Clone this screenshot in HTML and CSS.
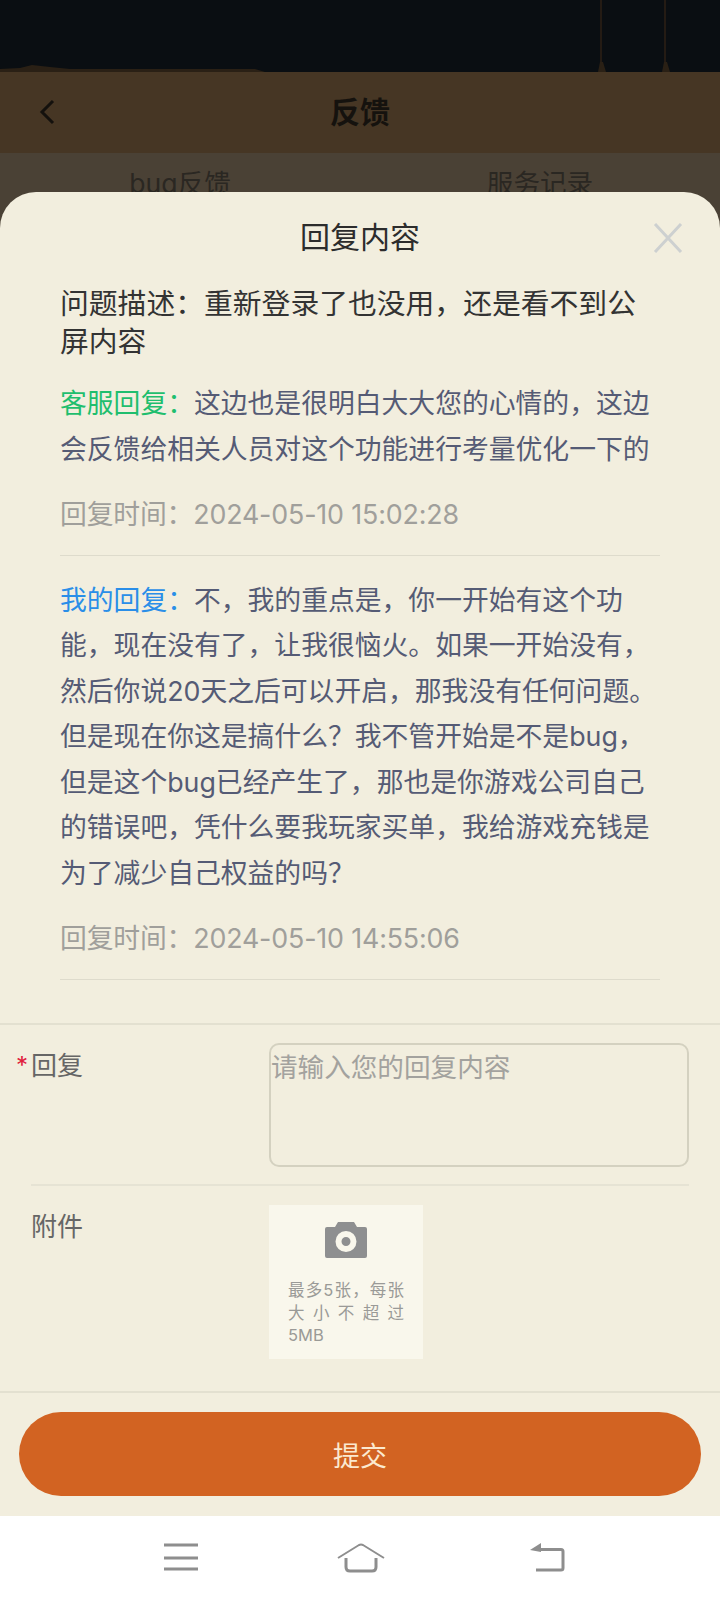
FILE: index.html

```html
<!DOCTYPE html>
<html lang="zh-CN">
<head>
    <meta charset="UTF-8">
    <meta name="viewport" content="width=device-width, initial-scale=1.0">
    <title>回复内容</title>
    <link rel="stylesheet" href="styles.css">
</head>
<body>
    <div class="screen">
        <div class="top-art">
            <svg width="720" height="72" viewBox="0 0 720 72">
                <path d="M0 72 V69 L20 68 L32 65 L50 67 L70 69 L255 69 L265 72 Z" fill="#2a2015"/>
                <path d="M601 0 V62 M665 0 V62" stroke="#241b14" stroke-width="2"/>
                <path d="M598 72 L600 62 H603 L606 72 Z M662 72 L664 62 H667 L670 72 Z" fill="#2a2015"/>
            </svg>
        </div>
        <header class="topbar">
            <svg class="back" width="18" height="26" viewBox="0 0 18 26">
                <path d="M15 2 L4 13 L15 24" fill="none" stroke="#14110d" stroke-width="3"/>
            </svg>
            <h1>反馈</h1>
        </header>
        <nav class="tabs">
            <span>bug反馈</span>
            <span>服务记录</span>
        </nav>

        <section class="sheet">
            <div class="sheet-title">
                回复内容
                <svg class="close" width="30" height="30" viewBox="0 0 30 30">
                    <path d="M2 1 L28 29 M28 1 L2 29" stroke="#cdd0d0" stroke-width="3"/>
                </svg>
            </div>

            <div class="thread">
                <p class="desc">问题描述&#xFF1A;重新登录了也没用&#xFF0C;还是看不到公屏内容</p>

                <div class="reply">
                    <p><span class="kefu">客服回复&#xFF1A;</span>这边也是很明白大大您的心情的&#xFF0C;这边会反馈给相关人员对这个功能进行考量优化一下的</p>
                    <p class="time">回复时间&#xFF1A;2024-05-10 15:02:28</p>
                </div>
                <div class="reply">
                    <p><span class="mine">我的回复&#xFF1A;</span>不&#xFF0C;我的重点是&#xFF0C;你一开始有这个功能&#xFF0C;现在没有了&#xFF0C;让我很恼火。如果一开始没有&#xFF0C;然后你说20天之后可以开启&#xFF0C;那我没有任何问题。但是现在你这是搞什么&#xFF1F;我不管开始是不是bug&#xFF0C;但是这个bug已经产生了&#xFF0C;那也是你游戏公司自己的错误吧&#xFF0C;凭什么要我玩家买单&#xFF0C;我给游戏充钱是为了减少自己权益的吗&#xFF1F;</p>
                    <p class="time">回复时间&#xFF1A;2024-05-10 14:55:06</p>
                </div>
            </div>

            <div class="form">
                <div class="row row-text">
                    <label class="required">回复</label>
                    <div class="input">请输入您的回复内容</div>
                </div>
                <div class="row row-file">
                    <label>附件</label>
                    <div class="upload">
                        <svg class="camera" width="42" height="36" viewBox="0 0 42 36">
                            <path fill-rule="evenodd" fill="#8e8f90" d="M13 0 H29 L32 5 H40 Q42 5 42 7 V34 Q42 36 40 36 H2 Q0 36 0 34 V7 Q0 5 2 5 H10 Z M21 9 A10.500 10.500 0 1 0 21 30 A10.500 10.500 0 1 0 21 9 Z M21 15 A4.500 4.500 0 1 1 21 24 A4.500 4.500 0 1 1 21 15 Z"/>
                        </svg>
                        <p>最多5张&#xFF0C;每张大小不超过5MB</p>
                    </div>
                </div>
            </div>

            <div class="actions">
                <button type="button" class="submit-btn">提交</button>
            </div>
        </section>

        <footer class="navbar">
            <svg width="34" height="28" viewBox="0 0 34 28">
                <path d="M0 2 H34 M0 15 H34 M0 26 H34" stroke="#8e8e8e" stroke-width="3"/>
            </svg>
            <svg class="nav-home" width="48" height="32" viewBox="0 0 48 32">
                <path d="M1 15 L22 2 Q24 1 26 2 L47 15" fill="none" stroke="#8e8e8e" stroke-width="2"/>
                <path d="M9 15 V24 Q9 28 13 28 H35 Q39 28 39 24 V15" fill="none" stroke="#8e8e8e" stroke-width="3"/>
            </svg>
            <svg width="36" height="30" viewBox="0 0 36 30">
                <path d="M0 7 L11 0 V9 Z" fill="#8e8e8e"/>
                <path d="M8 6.500 H31 Q33 6.500 33 8.500 V25 Q33 27 31 27 H6" fill="none" stroke="#8e8e8e" stroke-width="3"/>
            </svg>
        </footer>
    </div>
</body>
</html>
```

FILE: styles.css

```css
* { box-sizing: border-box; }
body { margin: 0; font-family: Inter, "Noto Sans CJK SC", sans-serif; }
p { margin: 0; }
.screen { width: 720px; height: 1600px; display: flex; flex-direction: column; background: #4a4135; overflow: hidden; }

.top-art { height: 72px; background: #0a0e12; }
.top-art svg { display: block; }
.topbar { height: 81px; padding-bottom: 5px; background: #463624; display: flex; align-items: center; justify-content: center; position: relative; }
.topbar h1 { margin: 0; font-size: 30px; font-weight: 700; color: #15120e; }
.back { position: absolute; left: 38px; top: 27px; }
.tabs { height: 39px; overflow: hidden; display: flex; padding-top: 11px; color: #2a2722; font-size: 26.600px; line-height: 38px; }
.tabs span { width: 360px; text-align: center; }

.sheet { height: 1324px; background: #f2eede; border-radius: 36px 36px 0 0; display: flex; flex-direction: column; }
.sheet-title { height: 91px; line-height: 91px; margin-bottom: 2px; text-align: center; font-size: 30px; color: #2c2c2c; position: relative; }
.close { position: absolute; right: 37px; top: 31px; }

.thread { padding: 0 60px; height: 738px; }
.desc { font-size: 28.800px; line-height: 38px; color: #333; margin-bottom: 20px; }
.reply { font-size: 26.800px; line-height: 45.500px; color: #555b75; border-bottom: 1px solid #dedbcc; padding-bottom: 17px; margin-bottom: 22px; }
.kefu { color: #1fbe6e; }
.mine { color: #2a8ee8; }
.time { margin-top: 20px; color: #a09f9b; letter-spacing: -0.15px; }

.form { border-top: 2px solid #e3e0d0; border-bottom: 2px solid #e3e0d0; height: 370px; padding: 18px 31px 0; }
.row { display: flex; }
.row label { width: 238px; flex: none; font-size: 26px; color: #666; position: relative; }
.row-text { height: 143px; border-bottom: 2px solid #e6e3d4; }
.row-text label { line-height: 46px; }
.required::before { content: "*"; position: absolute; left: -15px; top: 0; font-size: 24px; color: #e0203c; }
.input { width: 420px; height: 124px; border: 2px solid #d4d1c0; border-radius: 10px; font-size: 26.600px; line-height: 44px; color: #a3a29e; }
.row-file { padding-top: 19px; }
.row-file label { line-height: 44px; }
.upload { width: 154px; height: 154px; background: #f9f7ec; padding: 17px 19px 0; }
.camera { display: block; margin: 0 auto 21px; }
.upload p { font-size: 16.500px; line-height: 22.500px; color: #9a9a97; text-align: justify; }

.actions { padding: 19px 19px 0; }
.submit-btn { display: block; width: 682px; height: 84px; border: none; border-radius: 42px; background: #d26322; color: #fbe9d0; font-family: inherit; font-size: 27px; }

.navbar { flex: none; height: 84px; background: #fff; display: flex; align-items: flex-start; padding: 27px 154px 0 164px; justify-content: space-between; }
.nav-home { margin-right: 6px; }
```
